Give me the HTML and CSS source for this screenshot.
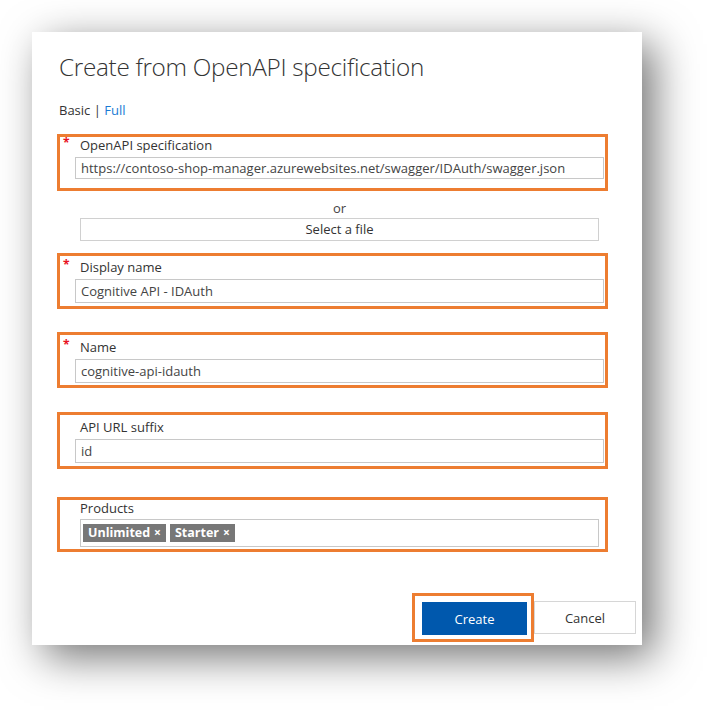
FILE: index.html
```html
<!DOCTYPE html>
<html>
<head>
<meta charset="utf-8">
<link rel="stylesheet" href="styles.css">
</head>
<body>
<div class="dialog">
  <h1 class="title">Create from OpenAPI specification</h1>
  <div class="mode">Basic | <span class="link">Full</span></div>

  <div class="hl hl-spec">
    <div class="label-row"><span class="req">*</span><span class="label">OpenAPI specification</span></div>
    <div class="input input-short">https://contoso-shop-manager.azurewebsites.net/swagger/IDAuth/swagger.json</div>
  </div>

  <div class="or">or</div>
  <div class="filebtn">Select a file</div>

  <div class="hl hl-display">
    <div class="label-row"><span class="req">*</span><span class="label">Display name</span></div>
    <div class="input">Cognitive API - IDAuth</div>
  </div>

  <div class="hl hl-name">
    <div class="label-row"><span class="req">*</span><span class="label">Name</span></div>
    <div class="input">cognitive-api-idauth</div>
  </div>

  <div class="hl hl-suffix">
    <div class="label-row"><span class="req"></span><span class="label">API URL suffix</span></div>
    <div class="input">id</div>
  </div>

  <div class="hl hl-products">
    <div class="label-row"><span class="req"></span><span class="label">Products</span></div>
    <div class="tags">
      <span class="tag">Unlimited <span class="x">×</span></span>
      <span class="tag">Starter <span class="x">×</span></span>
    </div>
  </div>

  <div class="actions">
    <div class="hl-btn"><button class="btn primary">Create</button></div>
    <button class="btn secondary">Cancel</button>
  </div>
</div>
</body>
</html>
```

FILE: styles.css
```css
* { box-sizing: border-box; }
html, body { margin: 0; padding: 0; background: #fff; }
body {
  font-family: "Open Sans", "Noto Sans", sans-serif;
  font-size: 13px;
  color: #333;
  width: 707px;
  height: 710px;
  overflow: hidden;
}
.dialog {
  margin: 32px 0 0 32px;
  width: 610px;
  height: 613px;
  background: #fff;
  box-shadow: 12px 12px 40px rgba(0,0,0,0.55);
  padding: 0 34px 3px 25px;
  display: flex;
  flex-direction: column;
}
.title {
  margin: 18px 0 0 2px;
  font-weight: 300;
  font-size: 24.3px;
  line-height: 34px;
  color: #333;
  letter-spacing: -0.3px;
}
.mode {
  margin: 17px 0 0 2px;
  line-height: 18px;
  font-size: 13px;
  color: #333;
}
.link { color: #1a7bd4; }
.hl {
  border: 3px solid #ed7d31;
  width: 551px;
}
.label-row {
  display: flex;
  line-height: 16px;
  height: 16px;
}
.req {
  width: 20px;
  padding-left: 3px;
  color: #e81123;
  font-size: 12px;
  font-weight: 700;
  line-height: 12px;
}
.label {
  font-size: 13px;
  color: #333;
}
.input {
  margin: 4px 1px 0 15px;
  height: 24px;
  border: 1px solid #c8c8c8;
  padding: 0 5px;
  line-height: 22px;
  font-size: 13px;
  color: #444;
  white-space: nowrap;
  overflow: hidden;
}
.input-short { height: 22px; line-height: 20px; }
.hl-spec { margin-top: 15px; padding: 0 0 9px; }
.hl-display { margin-top: 12px; padding: 3px 0 3px; }
.hl-name { margin-top: 23px; padding: 4px 0 2px; }
.hl-suffix { margin-top: 24px; padding: 4px 0 3px; }
.hl-products { margin-top: 28px; padding: 0 0 2px; }

.or {
  margin: 8px 0 0 23px;
  width: 519px;
  text-align: center;
  line-height: 18px;
  font-size: 13px;
  color: #444;
}
.filebtn {
  margin: 1px 0 0 23px;
  width: 519px;
  height: 23px;
  border: 1px solid #d0d0d0;
  text-align: center;
  line-height: 21px;
  font-size: 13px;
  color: #333;
}
.tags {
  margin: 3px 6px 0 20px;
  height: 28px;
  border: 1px solid #c8c8c8;
  padding: 4px 2px;
  display: flex;
  gap: 4px;
}
.tag {
  background: #777;
  color: #fff;
  font-weight: 700;
  font-size: 12.5px;
  line-height: 18px;
  height: 18px;
  padding: 0 5px;
  display: inline-flex;
  gap: 4px;
}
.tag .x { font-size: 12px; }

.actions {
  margin-top: auto;
  display: flex;
  justify-content: flex-end;
  align-items: center;
  margin-right: -28px;
}
.hl-btn {
  border: 3px solid #ed7d31;
  padding: 6px 4px 4px 7px;
}
.btn {
  font-family: "Open Sans", "Noto Sans", sans-serif;
  font-size: 13px;
  height: 33px;
  margin: 0;
  display: block;
}
.primary {
  width: 105px;
  background: #0058ad;
  color: #fff;
  border: 1px solid #0058ad;
}
.secondary {
  width: 102px;
  background: #fff;
  color: #333;
  border: 1px solid #d6d6d6;
}
```
